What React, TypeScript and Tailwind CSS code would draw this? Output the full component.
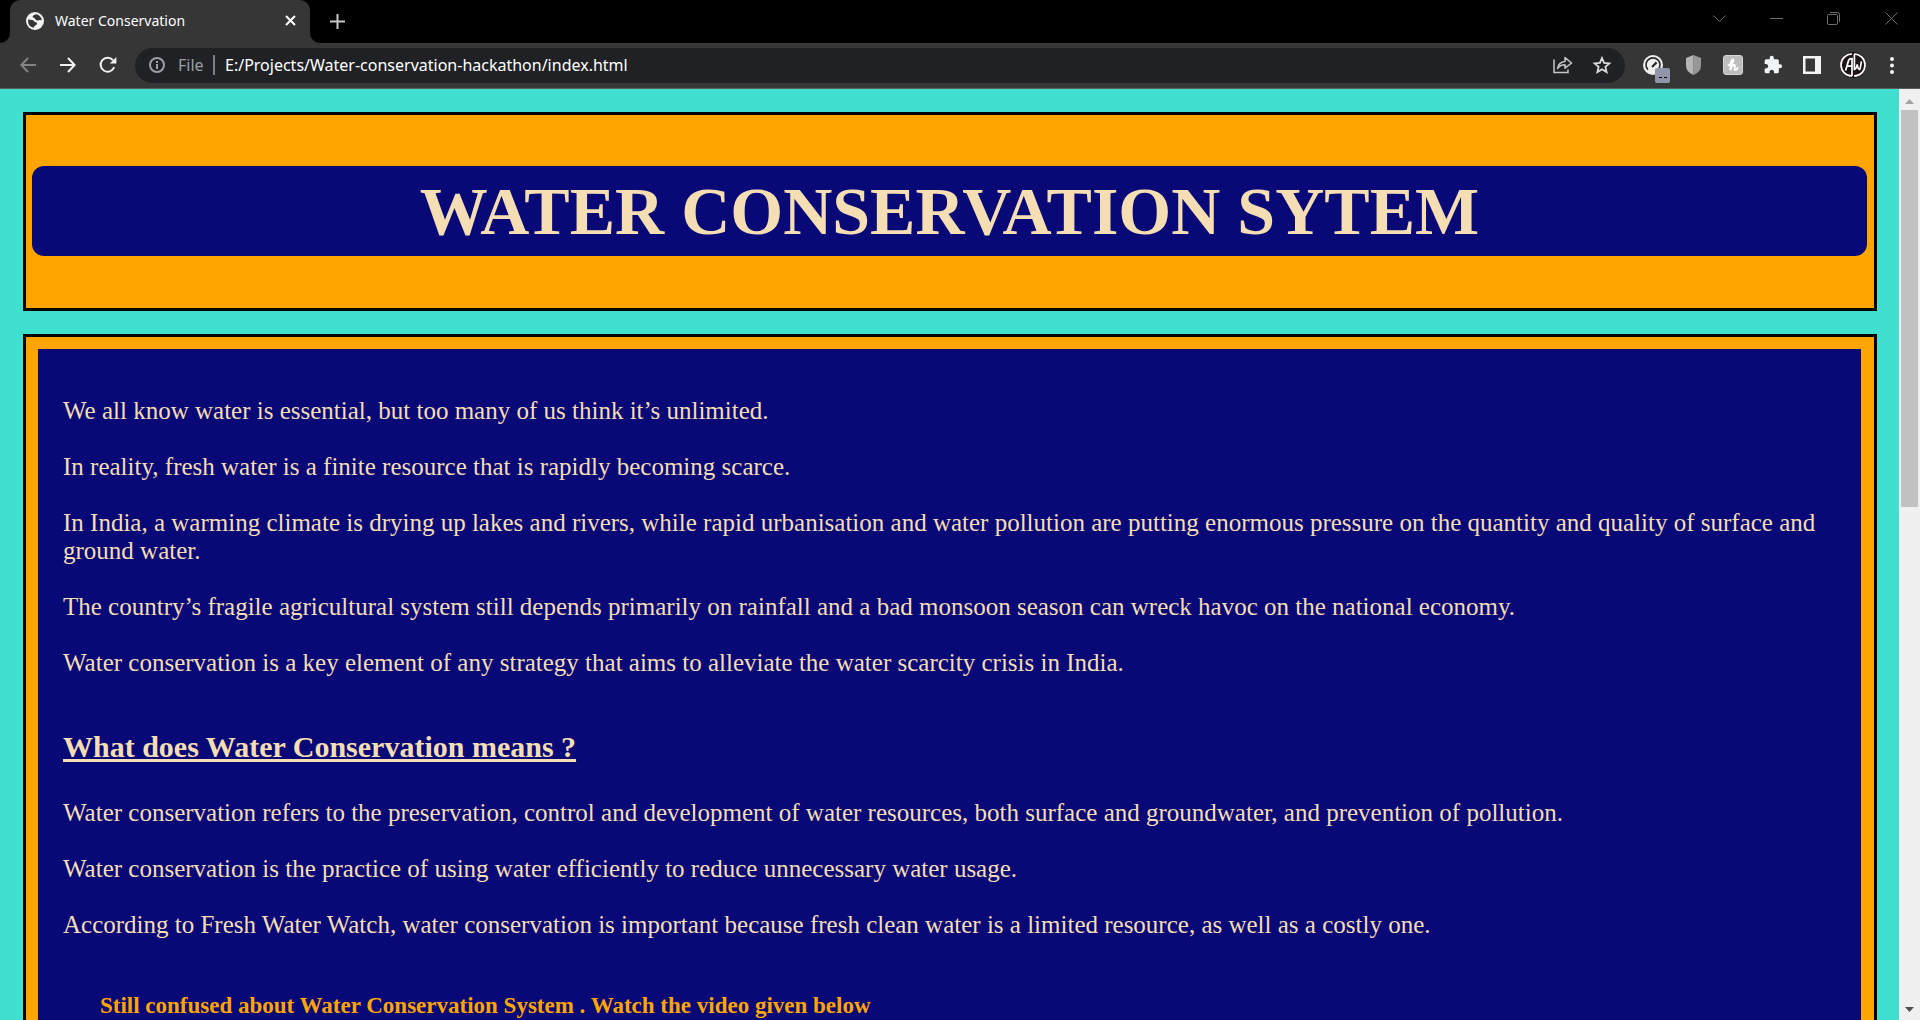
import React from "react";
import { MdExtension } from "react-icons/md";

const intro = [
  "We all know water is essential, but too many of us think it’s unlimited.",
  "In reality, fresh water is a finite resource that is rapidly becoming scarce.",
  "In India, a warming climate is drying up lakes and rivers, while rapid urbanisation and water pollution are putting enormous pressure on the quantity and quality of surface and ground water.",
  "The country’s fragile agricultural system still depends primarily on rainfall and a bad monsoon season can wreck havoc on the national economy.",
  "Water conservation is a key element of any strategy that aims to alleviate the water scarcity crisis in India.",
];

const meaning = [
  "Water conservation refers to the preservation, control and development of water resources, both surface and groundwater, and prevention of pollution.",
  "Water conservation is the practice of using water efficiently to reduce unnecessary water usage.",
  "According to Fresh Water Watch, water conservation is important because fresh clean water is a limited resource, as well as a costly one.",
];

function IconButton({ label, className = "", children }: { label: string; className?: string; children: React.ReactNode }) {
  return (
    <button type="button" aria-label={label} className={"flex shrink-0 items-center justify-center " + className}>
      {children}
    </button>
  );
}

function Globe() {
  return (
    <svg viewBox="0 0 18 18" className="size-[18px] shrink-0" aria-hidden="true">
      <circle cx="9" cy="9" r="9" fill="#f1f3f4" />
      <path
        d="M2.2 7.6 L6.2 8 Q8 8.4 8.2 9.6 Q8.8 10.4 10.4 10.4 Q11.4 10.8 11 12 Q10.4 13.2 9.2 13.4 Q8 13.8 8 15.8 Q4 15.2 2.6 12 Q1.8 9.6 2.2 7.6Z"
        fill="#363636"
      />
      <path
        d="M10.6 2.2 Q8.4 2.6 7.4 3.6 Q6 4.8 7 5.6 Q8.6 6 9.4 7.2 Q10.4 8.6 12 8.4 Q13 7.6 15.8 8.2 Q15.4 4 10.6 2.2Z"
        fill="#363636"
      />
    </svg>
  );
}

function TabStrip() {
  return (
    <header className="flex h-[43px] shrink-0 items-stretch bg-black text-white">
      <div className="flex w-[10px] items-end bg-[#363636]">
        <span className="h-full w-full rounded-br-[10px] bg-black" />
      </div>
      <div className="flex w-[300px] items-center rounded-t-[10px] bg-[#363636] pr-2 pb-[2px] pl-4">
        <Globe />
        <span className="ml-[11px] flex-1 text-[14px] leading-5">Water Conservation</span>
        <IconButton label="Close tab" className="size-6">
          <svg viewBox="0 0 11 11" className="size-[11px]" stroke="#fff" strokeWidth="2">
            <path d="M1 1l9 9M10 1l-9 9" />
          </svg>
        </IconButton>
      </div>
      <div className="flex w-[10px] items-end bg-[#363636]">
        <span className="h-full w-full rounded-bl-[10px] bg-black" />
      </div>
      <IconButton label="New tab" className="w-[35px]">
        <svg viewBox="0 0 15 15" className="size-[15px]" stroke="#c8c8c8" strokeWidth="2">
          <path d="M7.5 0v15M0 7.5h15" />
        </svg>
      </IconButton>
      <div className="flex-1" />
      <div className="flex h-9 items-center text-[#6e6e6e]">
        <IconButton label="Search tabs" className="h-9 w-[57px]">
          <svg viewBox="0 0 13 7" className="h-[7px] w-[13px]" fill="none" stroke="currentColor">
            <path d="M0.5 0.5l6 6 6-6" />
          </svg>
        </IconButton>
        <IconButton label="Minimize" className="h-9 w-[57px]">
          <svg viewBox="0 0 13 1" className="h-px w-[13px]" fill="currentColor">
            <path d="M0 0h13v1H0z" />
          </svg>
        </IconButton>
        <IconButton label="Restore" className="h-9 w-[57px]">
          <svg viewBox="0 0 13 13" className="size-[13px]" fill="none" stroke="currentColor">
            <rect x="0.5" y="2.5" width="10" height="10" rx="1" />
            <path d="M3 0.5h7.5q2 0 2 2V10" />
          </svg>
        </IconButton>
        <IconButton label="Close" className="h-9 w-[58px]">
          <svg viewBox="0 0 13 13" className="size-[13px]" fill="none" stroke="currentColor">
            <path d="M0.5 0.5l12 12M12.5 0.5l-12 12" />
          </svg>
        </IconButton>
      </div>
    </header>
  );
}

function Toolbar() {
  return (
    <nav className="flex h-[46px] shrink-0 items-center border-b border-[#5c5c5c] bg-[#363636] pr-[10px] pb-px pl-2 text-white">
      <IconButton label="Back" className="h-9 w-10">
        <svg viewBox="0 0 16 16" className="size-4" fill="none" stroke="#848484" strokeWidth="2">
          <path d="M16 8H1.5M8 1L1.4 8L8 15" />
        </svg>
      </IconButton>
      <IconButton label="Forward" className="h-9 w-10">
        <svg viewBox="0 0 16 16" className="size-4" fill="none" stroke="#f1f3f4" strokeWidth="2">
          <path d="M0 8h14.5M8 1l6.6 7L8 15" />
        </svg>
      </IconButton>
      <IconButton label="Reload" className="h-9 w-10">
        <svg viewBox="0 0 18 18" className="size-[18px]" fill="none" stroke="#f1f3f4" strokeWidth="2">
          <path d="M15.2 11.2A7 7 0 1 1 14 4.2" />
          <path d="M17.4 1v6.6h-6.6z" fill="#f1f3f4" stroke="none" />
        </svg>
      </IconButton>
      <div className="ml-[7px] flex h-[35px] flex-1 items-center rounded-full bg-[#202124] pr-1 pl-[14px] text-[16px] leading-5">
        <svg viewBox="0 0 16 16" className="size-4 shrink-0" fill="none" stroke="#9aa0a6" strokeWidth="2" aria-hidden="true">
          <circle cx="8" cy="8" r="7" />
          <path d="M8 7v5M8 4v2" />
        </svg>
        <span className="ml-[13px] w-[35px] text-[#9aa0a6]">File</span>
        <span className="h-5 w-[2px] shrink-0 bg-[#7b7e82]" />
        <input
          aria-label="Address"
          defaultValue="E:/Projects/Water-conservation-hackathon/index.html"
          className="ml-[10px] min-w-0 flex-1 bg-transparent outline-none"
        />
        <IconButton label="Share" className="h-8 w-10">
          <svg viewBox="0 0 20 18" className="h-[18px] w-5" fill="none" stroke="#c4c7c9" strokeWidth="1.5">
            <path d="M1 3.5v13h14v-3" />
            <path d="M4.5 12.5Q5.5 6 12 5.4V1.6L18.6 7L12 12.2V8.8Q7.2 8.8 4.5 12.5z" strokeLinejoin="round" />
          </svg>
        </IconButton>
        <IconButton label="Bookmark" className="h-8 w-[38px]">
          <svg viewBox="0 0 20 20" className="size-5" fill="none" stroke="#dadce0" strokeWidth="1.8">
            <path d="M10 3l2.1 4.9 5.3.5-4 3.5 1.2 5.2-4.6-2.8-4.6 2.8 1.2-5.2-4-3.5 5.3-.5z" />
          </svg>
        </IconButton>
      </div>
      <div className="flex items-center pl-2">
        <IconButton label="Speed gauge" className="relative h-9 w-10">
          <svg viewBox="0 0 20 20" className="size-5" fill="none">
            <circle cx="10" cy="10" r="10" fill="#efefef" />
            <path d="M5 14.8A7 7 0 1 1 15 14.8" stroke="#2a2a2a" strokeWidth="1.6" />
            <path d="M9 12l4.6-4.6" stroke="#2a2a2a" strokeWidth="2.2" />
          </svg>
          <span className="absolute right-[3px] bottom-0 flex size-[15px] items-center justify-center gap-[2px] rounded-[2px] bg-[#9294ac]">
            <span className="mt-[3px] h-px w-[3px] bg-black" />
            <span className="mt-[3px] h-px w-[3px] bg-black" />
          </span>
        </IconButton>
        <IconButton label="Shield" className="h-9 w-10">
          <svg viewBox="0 0 15 20" className="h-5 w-[15px]">
            <path d="M7.5 0L15 3v7.5q0 6.5-7.5 9.5z" fill="#979797" />
            <path d="M7.5 0L0 3v7.5q0 6.5 7.5 9.5z" fill="#b5b5b5" />
          </svg>
        </IconButton>
        <IconButton label="Coupons" className="h-9 w-10">
          <svg viewBox="0 0 20 20" className="size-5" fill="none">
            <rect x="0.5" y="0.5" width="19" height="19" rx="2.5" fill="#bdbdbd" stroke="#d6d6d6" />
            <path
              d="M5.4 10.2Q10.6 8 10.4 5.2Q9.8 3.4 8.6 5.6Q7.6 8 7.4 15.2Q8.8 10 11 9.8Q12.4 10 11.6 13Q11.2 15.4 12.6 15Q13.8 14.6 14.6 12.8"
              stroke="#fff"
              strokeWidth="1.9"
              strokeLinecap="round"
            />
          </svg>
        </IconButton>
        <IconButton label="Extensions" className="h-9 w-[39px]">
          <MdExtension className="size-5 text-[#f1f3f4]" />
        </IconButton>
        <IconButton label="Side panel" className="h-9 w-[40px]">
          <svg viewBox="0 0 18 18" className="size-[18px]" fill="none">
            <path d="M0 0h18v18H0zM2.5 2.5v13H12v-13z" fill="#f1f3f4" fillRule="evenodd" />
          </svg>
        </IconButton>
        <IconButton label="Profile" className="h-9 w-[42px]">
          <svg viewBox="0 0 26 26" className="size-[26px]" fill="none">
            <circle cx="13" cy="13" r="13" fill="#1d1416" />
            <g stroke="#fff" strokeWidth="1.7">
              <path d="M12 24A11 11 0 0 1 12 2M14 2A11 11 0 0 1 14 24" />
              <path d="M5.6 18.6L8.6 8.4Q9.4 6.4 12 6.6V24M7.4 14.2H12" />
              <path d="M14.4 2V17.4Q16.2 17.6 17.2 12.4Q18 17.6 19.6 17.4Q20.4 16.6 21.4 9.4" />
            </g>
          </svg>
        </IconButton>
        <IconButton label="Menu" className="h-9 w-9">
          <svg viewBox="0 0 4 17" className="h-[17px] w-1" fill="#f1f3f4">
            <circle cx="2" cy="2" r="2" />
            <circle cx="2" cy="8.5" r="2" />
            <circle cx="2" cy="15" r="2" />
          </svg>
        </IconButton>
      </div>
    </nav>
  );
}

function Scrollbar() {
  return (
    <div className="flex w-[21px] shrink-0 flex-col items-center bg-[#f0f0f0]" aria-hidden="true">
      <div className="flex h-[21px] items-center justify-center pt-1">
        <svg viewBox="0 0 9 5" className="h-[5px] w-[9px]" fill="#a3a3a3">
          <path d="M0 5L4.5 0L9 5z" />
        </svg>
      </div>
      <div className="h-[42.6%] w-[17px] bg-[#c1c1c1]" />
      <div className="flex-1" />
      <div className="flex h-[21px] items-center justify-center">
        <svg viewBox="0 0 9 5" className="h-[5px] w-[9px]" fill="#505050">
          <path d="M0 0L4.5 5L9 0z" />
        </svg>
      </div>
    </div>
  );
}

export default function App() {
  return (
    <div className="flex h-screen flex-col overflow-hidden font-['Noto_Sans','Open_Sans',sans-serif]">
      <TabStrip />
      <Toolbar />
      <div className="flex min-h-0 flex-1">
        <main className="flex min-w-0 flex-1 flex-col gap-[23px] overflow-hidden bg-[#40e0d0] pt-[23px] pr-[22px] pl-[23px] font-['Liberation_Serif','Times_New_Roman',serif] text-[#f5deb3]">
          <section className="shrink-0 border-[3px] border-black bg-[#ffa500] pt-[51px] pr-[7px] pb-[52px] pl-[6px]">
            <h1 className="rounded-xl bg-[#080877] py-[5px] text-center text-[68px] leading-[80px] font-bold">
              WATER CONSERVATION SYTEM
            </h1>
          </section>
          <section className="shrink-0 border-[3px] border-black bg-[#ffa500] py-3 pr-[13px] pl-3">
            <div className="bg-[#080877] px-[25px] pt-12 pb-24 text-[25px] leading-7">
              <div className="flex flex-col gap-7">
                {intro.map((text) => (
                  <p key={text}>{text}</p>
                ))}
              </div>
              <h2 className="mt-[53px] text-[30px] leading-[34px] font-bold underline decoration-[3px]">
                What does Water Conservation means ?
              </h2>
              <div className="mt-[35px] flex flex-col gap-7">
                {meaning.map((text) => (
                  <p key={text}>{text}</p>
                ))}
              </div>
              <h3 className="mt-[53px] ml-[37px] text-[23px] leading-7 font-bold text-[#ffa500]">
                Still confused about Water Conservation System . Watch the video given below
              </h3>
            </div>
          </section>
        </main>
        <Scrollbar />
      </div>
    </div>
  );
}
